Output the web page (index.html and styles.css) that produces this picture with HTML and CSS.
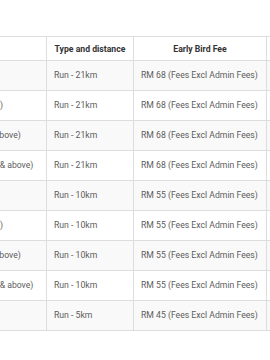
FILE: index.html
```html
<!DOCTYPE html>
<html>
<head>
<meta charset="utf-8">
<link rel="stylesheet" href="styles.css">
</head>
<body>
<div class="frame">
<table class="fees">
  <colgroup>
    <col class="c1"><col class="c2"><col class="c3"><col class="c4">
  </colgroup>
  <thead>
    <tr><th>Category</th><th>Type and distance</th><th>Early Bird Fee</th><th>Normal Fee</th></tr>
  </thead>
  <tbody>
    <tr><td>Men Open (18 - 39)</td><td>Run - 21km</td><td>RM 68 (Fees Excl Admin Fees)</td><td>RM 78 (Fees Excl Admin Fees)</td></tr>
    <tr><td>Women Open (18 - 39)</td><td>Run - 21km</td><td>RM 68 (Fees Excl Admin Fees)</td><td>RM 78 (Fees Excl Admin Fees)</td></tr>
    <tr><td>Men Veterans (40 &amp; above)</td><td>Run - 21km</td><td>RM 68 (Fees Excl Admin Fees)</td><td>RM 78 (Fees Excl Admin Fees)</td></tr>
    <tr><td>Women Veterans (40 &amp; above)</td><td>Run - 21km</td><td>RM 68 (Fees Excl Admin Fees)</td><td>RM 78 (Fees Excl Admin Fees)</td></tr>
    <tr><td>Men Open (18 - 39)</td><td>Run - 10km</td><td>RM 55 (Fees Excl Admin Fees)</td><td>RM 65 (Fees Excl Admin Fees)</td></tr>
    <tr><td>Women Open (18 - 39)</td><td>Run - 10km</td><td>RM 55 (Fees Excl Admin Fees)</td><td>RM 65 (Fees Excl Admin Fees)</td></tr>
    <tr><td>Men Veterans (40 &amp; above)</td><td>Run - 10km</td><td>RM 55 (Fees Excl Admin Fees)</td><td>RM 65 (Fees Excl Admin Fees)</td></tr>
    <tr><td>Women Veterans (40 &amp; above)</td><td>Run - 10km</td><td>RM 55 (Fees Excl Admin Fees)</td><td>RM 65 (Fees Excl Admin Fees)</td></tr>
    <tr><td>Fun Run (All Ages)</td><td>Run - 5km</td><td>RM 45 (Fees Excl Admin Fees)</td><td>RM 55 (Fees Excl Admin Fees)</td></tr>
  </tbody>
</table>
</div>
</body>
</html>
```
FILE: styles.css
```css
html, body {
  margin: 0;
  padding: 0;
  background: #fff;
}
.frame {
  width: 270px;
  height: 360px;
  overflow: hidden;
  padding-top: 36px;
  box-sizing: border-box;
}
.fees {
  border-collapse: collapse;
  table-layout: fixed;
  width: 457px;
  margin-left: -91px;
  font-family: Roboto, "Liberation Sans", sans-serif;
  font-size: 8.67px;
  color: #5c5c5c;
}
.c1 { width: 137px; }
.c2 { width: 87px; }
.c3 { width: 133px; }
.c4 { width: 100px; }
.fees th, .fees td {
  border: 1px solid #ddd;
  white-space: nowrap;
  overflow: hidden;
}
.fees th {
  height: 23px;
  padding: 0 7px;
  font-weight: bold;
  color: #333;
  text-align: center;
  vertical-align: middle;
}
.fees td {
  height: 30px;
  padding: 0 7px 2px 7px;
  text-align: left;
  vertical-align: middle;
  box-sizing: border-box;
}
.fees tbody tr:nth-child(odd) td {
  background: #f9f9f9;
}
```
